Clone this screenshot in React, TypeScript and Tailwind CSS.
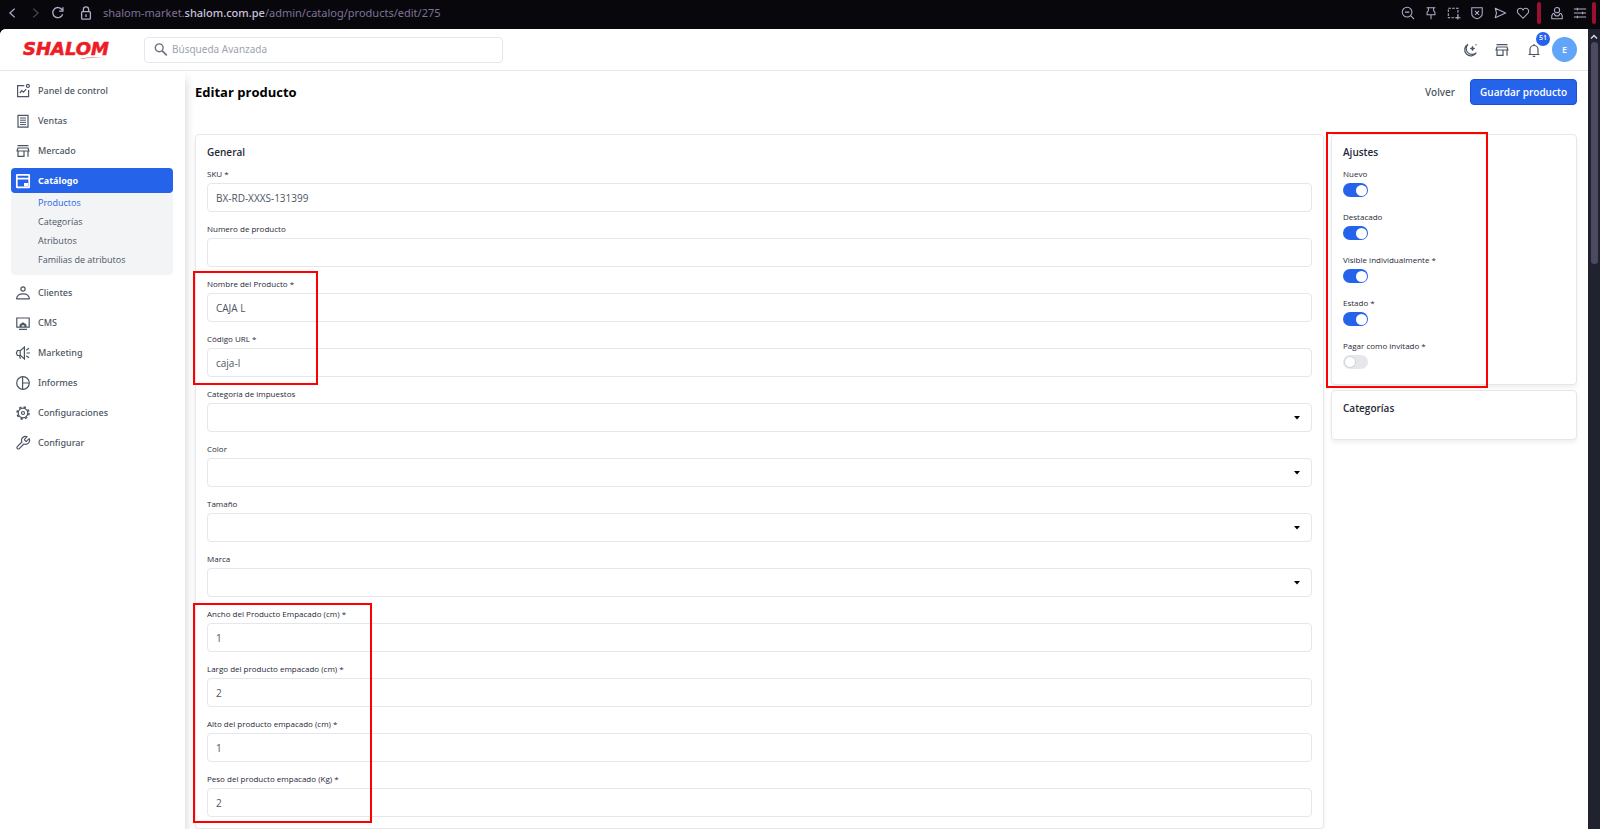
import type { ReactNode } from "react";

type IconProps = { children: ReactNode; className?: string };

const Icon = ({ children, className = "size-4" }: IconProps) => (
  <svg
    viewBox="0 0 16 16"
    className={`${className} shrink-0`}
    fill="none"
    stroke="currentColor"
    strokeWidth="1.2"
    aria-hidden="true"
  >
    {children}
  </svg>
);

const storePaths = (
  <>
    <path d="M2.5 2.6h11" />
    <path d="M3 5l-.9 3h11.8L13 5z" />
    <path d="M3 8v5.4h6V8M13 8v5.8" />
  </>
);

const menu = [
  {
    name: "Panel de control",
    icon: (
      <>
        <path d="M9.3 2.6H2.6v11h11V7" />
        <circle cx="12.9" cy="2.9" r="1.5" />
        <path d="M4.8 10l2-2.4 1.7 1.6 2.6-3" />
      </>
    ),
  },
  {
    name: "Ventas",
    icon: (
      <>
        <path d="M3 2.4h10v11.8H3z" />
        <path d="M5 5h6M5 7.2h6M5 9.4h6M5 11.6h6" strokeWidth="1" />
      </>
    ),
  },
  { name: "Mercado", icon: storePaths },
  {
    name: "Catálogo",
    active: true,
    icon: (
      <>
        <rect x="1.8" y="1.8" width="12.4" height="12.6" rx=".5" strokeWidth="1.7" />
        <path d="M2 5.7h12" strokeWidth="1.7" />
        <path d="M9 10h4v3.5H9z" fill="currentColor" stroke="none" />
      </>
    ),
    children: ["Productos", "Categorías", "Atributos", "Familias de atributos"],
  },
  {
    name: "Clientes",
    icon: (
      <>
        <circle cx="8" cy="4" r="2.1" />
        <path d="M1.6 13.8c.2-3 2.5-5 6.4-5s6.2 2 6.4 5z" strokeLinejoin="round" />
      </>
    ),
  },
  {
    name: "CMS",
    icon: (
      <>
        <path d="M1.8 3h12.4v9.2H1.8zM4 14.3h8" />
        <path d="M4.6 12V9.6L8 7.3l3.4 2.3V12H9.3v-1.7H6.7V12z" fill="currentColor" stroke="none" />
      </>
    ),
  },
  {
    name: "Marketing",
    icon: (
      <>
        <path d="M9.4 2v12L5.6 10.5H2.4L1.4 8l1-2.5h3.2z" />
        <path d="M5.2 5.7v4.8M4.5 10.7l1 3M11.5 8h3.5M11.3 5.2l2.7-2M11.3 10.8l2.7 2" />
      </>
    ),
  },
  {
    name: "Informes",
    icon: (
      <>
        <circle cx="8" cy="8" r="6.3" />
        <path d="M7.6 1.7v12.6M7.6 8h6.7" />
      </>
    ),
  },
  {
    name: "Configuraciones",
    icon: (
      <>
        <circle cx="8" cy="8" r="4.8" />
        <circle cx="8" cy="8" r="6" strokeWidth="1.5" strokeDasharray="2.35 2.35" />
        <circle cx="8" cy="8" r="1.5" />
      </>
    ),
  },
  {
    name: "Configurar",
    icon: (
      <path
        d="M9.7 4.2a.7.7 0 0 0 0 .9l1.1 1.1a.7.7 0 0 0 .9 0l2.5-2.5a4 4 0 0 1-5.3 5.3l-4.6 4.6a1.4 1.4 0 0 1-2-2l4.6-4.6a4 4 0 0 1 5.3-5.3z"
        strokeLinejoin="round"
      />
    ),
  },
];

const toggles = [
  { id: "new", label: "Nuevo", on: true },
  { id: "featured", label: "Destacado", on: true },
  { id: "visible", label: "Visible individualmente *", on: true },
  { id: "status", label: "Estado *", on: true },
  { id: "guest-checkout", label: "Pagar como invitado *", on: false },
];

const Caption = ({ id, children }: { id: string; children: ReactNode }) => (
  <label htmlFor={id} className="block text-[8px] leading-4 font-medium text-[#1f2937]">
    {children}
  </label>
);

const TextField = ({ id, label, value = "" }: { id: string; label: string; value?: string }) => (
  <div className="mb-[9px]">
    <Caption id={id}>{label}</Caption>
    <input
      id={id}
      type="text"
      defaultValue={value}
      className="mt-px block h-[29px] w-full rounded border border-[#e5e7eb] px-2 text-[10px] text-[#4b5563] outline-none"
    />
  </div>
);

const SelectField = ({ id, label }: { id: string; label: string }) => (
  <div className="mb-[9px]">
    <Caption id={id}>{label}</Caption>
    <div className="relative mt-px">
      <select
        id={id}
        className="block h-[29px] w-full appearance-none rounded border border-[#e5e7eb] bg-white px-2 text-[10px] text-[#4b5563] outline-none"
      >
        <option value=""></option>
      </select>
      <svg viewBox="0 0 6 4" className="pointer-events-none absolute top-[13px] right-3 h-1 w-1.5" aria-hidden="true">
        <path d="M0 0h6L3 3.6z" fill="#000" />
      </svg>
    </div>
  </div>
);

const Toggle = ({ id, label, on }: { id: string; label: string; on: boolean }) => (
  <div>
    <Caption id={id}>{label}</Caption>
    <input
      id={id}
      type="checkbox"
      role="switch"
      defaultChecked={on}
      className="mt-px block h-3.5 w-[25px] appearance-none rounded-full bg-[#e5e7eb] p-0.5 before:block before:size-2.5 before:rounded-full before:bg-white before:ring-1 before:ring-[#d1d5db] checked:bg-[#2563eb] checked:pr-px checked:before:ml-auto checked:before:size-[11px] checked:before:ring-0"
    />
  </div>
);

// Red frame drawn over the parts of the form that need attention
const Highlight = ({ className }: { className: string }) => (
  <div className={`pointer-events-none absolute z-10 border-2 border-[#ff0000] ${className}`} />
);

const BrowserBar = () => (
  <div className="flex h-[29px] shrink-0 items-center bg-[#08070b] pb-[3px] text-[#b3abc9]">
    <div className="flex items-center pl-1.5">
      <Icon className="size-[14px]"><path d="M10 3L4.5 8l5.5 5" strokeWidth="1.5" /></Icon>
      <Icon className="ml-2 size-[14px] text-[#4a4655]"><path d="M6 3l5.5 5L6 13" strokeWidth="1.5" /></Icon>
      <Icon className="ml-[9px] size-[14px]">
        <path d="M13.3 9.5A5.8 5.8 0 1 1 12.8 4.5M13.6 1.5v4.3H9.3" strokeWidth="1.5" />
      </Icon>
      <Icon className="ml-[14px] size-[14px]">
        <rect x="3" y="6.5" width="10" height="8.5" rx="1" strokeWidth="1.5" />
        <path d="M5 6.5V4a3 3 0 0 1 6 0v2.5M8 9.5v3" strokeWidth="1.5" />
      </Icon>
      <span className="ml-[10px] font-['Noto_Sans',sans-serif] text-[11px] text-[#7f7299]">
        shalom-market.<span className="font-medium text-[#c9c2dc]">shalom.com.pe</span>
        /admin/catalog/products/edit/275
      </span>
    </div>
    <div className="ml-auto flex items-center">
      <div className="flex gap-[9px]">
        <Icon className="size-[14px]"><circle cx="7" cy="7" r="5.5" /><path d="M11 11l4 4M4.5 7h5" /></Icon>
        <Icon className="size-[14px]"><path d="M3 2h10M5 2v3.5L3.5 7v3h9V7L11 5.5V2M8 10v5" /></Icon>
        <Icon className="size-[14px]">
          <path d="M1.5 2.5h11v11h-11z" strokeDasharray="3 1.4" />
          <path d="M12.5 10.5v5M10 13.5h5.5" />
        </Icon>
        <Icon className="size-[14px]">
          <path d="M2 2h12v6.5c0 3-2.5 5-6 6-3.5-1-6-3-6-6zM5.7 5.5l4.6 4.6M10.3 5.5l-4.6 4.6" />
        </Icon>
        <Icon className="size-[14px]"><path d="M2.5 2.5L14.5 8l-12 5.5L4 8z" strokeLinejoin="round" /></Icon>
        <Icon className="size-[14px]">
          <path d="M8 14L2.5 8.5C.5 6 2 2.5 4.8 2.5 6.5 2.5 7.5 3.5 8 4.5c.5-1 1.5-2 3.2-2C14 2.5 15.5 6 13.5 8.5z" />
        </Icon>
      </div>
      <span className="ml-[7px] h-[22px] w-1 rounded-full bg-[#9b1030]" />
      <Icon className="ml-[9px] size-[14px]">
        <circle cx="8" cy="4.8" r="3" />
        <path d="M5 8.5H3.5L2 11v3.5h12V11l-1.5-2.5H11M5 8.5c0 4 6 4 6 0" />
      </Icon>
      <Icon className="ml-[9px] size-[14px]"><path d="M1 3.5h14M1 8h14M1 12.5h14M5 2v3M11 6.5v3M5 11v3" /></Icon>
      <span className="mr-1 ml-[5px] h-[22px] w-1 rounded-full bg-[#9b1030]" />
    </div>
  </div>
);

const Logo = () => (
  <svg viewBox="0 0 102 20" className="ml-[22px] h-5 w-[102px] overflow-visible" role="img" aria-label="Shalom">
    <text
      x="1"
      y="15"
      className="fill-[#ee1c25] font-['DejaVu_Sans',sans-serif] text-[18px] font-bold italic"
      stroke="#ee1c25"
      strokeWidth=".6"
    >
      SHALOM
    </text>
    <path d="M58 18.5c8-1.6 18-1.6 27-.6-8-.2-18-.2-25 1.1z" fill="#ee1c25" opacity=".6" />
  </svg>
);

const TopBar = () => (
  <header className="flex h-[42px] shrink-0 items-center border-b border-[#e5e7eb] bg-white">
    <Logo />
    <label className="ml-5 flex h-[26px] w-[359px] items-center rounded border border-[#e5e7eb] pl-2 text-[#6b7280]">
      <Icon className="size-4">
        <circle cx="6.2" cy="5.8" r="3.9" strokeWidth="1.4" />
        <path d="M9 8.6l4.8 4.8" strokeWidth="1.7" />
      </Icon>
      <input
        type="text"
        aria-label="Búsqueda Avanzada"
        placeholder="Búsqueda Avanzada"
        className="ml-[3px] w-full font-['Noto_Sans',sans-serif] text-[10px] text-[#4b5563] outline-none placeholder:text-[#9ca3af]"
      />
    </label>
    <div className="ml-auto flex items-center pr-[11px] text-[#4b5563]">
      <button type="button" aria-label="Modo oscuro">
        <Icon>
          <path d="M6 2.2a6.2 6.2 0 1 0 8.3 8.5A5.8 5.8 0 0 1 6 2.2z" />
          <path d="M10.5 4l.7 1.8 1.8.7-1.8.7-.7 1.8-.7-1.8L8 6.5l1.8-.7zM14 2v1.6M13.2 2.8h1.6" fill="currentColor" strokeWidth=".5" />
        </Icon>
      </button>
      <button type="button" aria-label="Tienda" className="ml-4"><Icon>{storePaths}</Icon></button>
      <button type="button" aria-label="Notificaciones" className="relative ml-4">
        <Icon>
          <path d="M2.5 12.5h11M4 12.5V7.5a4 4 0 0 1 8 0v5M8 3.5V2M6.8 14.3h2.4" />
        </Icon>
        <span className="absolute -top-2.5 left-2.5 flex size-3.5 items-center justify-center rounded-full bg-[#2563eb] text-[7px] font-semibold text-white">
          51
        </span>
      </button>
      <button
        type="button"
        className="ml-[10px] flex size-[25px] items-center justify-center rounded-full bg-[#60a5fa] text-[9px] font-semibold text-white"
      >
        E
      </button>
    </div>
  </header>
);

const Sidebar = () => (
  <nav className="z-10 flex w-[185px] shrink-0 flex-col gap-[5px] bg-white pt-[7px] pr-3 pl-[11px] text-[9px] shadow-[0_8px_10px_rgba(0,0,0,0.2)]">
    {menu.map((item) => (
      <div key={item.name}>
        <a
          href="#"
          className={`flex h-[25px] items-center gap-[7px] rounded pl-1 font-['Noto_Sans',sans-serif] ${
            item.active ? "bg-[#2563eb] font-bold text-white" : "font-medium text-[#4b5563]"
          }`}
        >
          <Icon>{item.icon}</Icon>
          {item.name}
        </a>
        {item.children && (
          <div className="rounded-b bg-[#f3f4f6] pb-1.5 pl-[27px]">
            {item.children.map((child, i) => (
              <a key={child} href="#" className={`block leading-[19px] ${i === 0 ? "text-[#2563eb]" : "text-[#4b5563]"}`}>
                {child}
              </a>
            ))}
          </div>
        )}
      </div>
    ))}
  </nav>
);

const Card = ({ title, className = "", children }: { title: string; className?: string; children?: ReactNode }) => (
  <section
    className={`relative rounded-sm border border-[#e5e7eb] bg-white px-[11px] pt-[9px] shadow-[0_3px_4px_rgba(0,0,0,0.06)] ${className}`}
  >
    <h2 className="mb-1.5 text-[10px] leading-4 font-semibold text-[#1f2937]">{title}</h2>
    {children}
  </section>
);

export default function App() {
  return (
    <div className="flex h-screen flex-col overflow-hidden bg-[#08070b] font-['Open_Sans','Noto_Sans',sans-serif]">
      <BrowserBar />
      <div className="flex min-h-0 flex-1">
        <div className="flex min-w-0 flex-1 flex-col overflow-hidden rounded-tl-md bg-white">
          <TopBar />
          <div className="flex min-h-0 flex-1">
            <Sidebar />
            <main className="min-w-0 flex-1 overflow-hidden pt-2 pr-[11px] pl-[10px]">
              <div className="flex items-center justify-between">
                <h1 className="pt-0.5 text-[13px] font-bold text-black">Editar producto</h1>
                <div className="flex items-center gap-[15px]">
                  <a href="#" className="font-['Noto_Sans',sans-serif] text-[10px] font-medium text-[#4b5563]">Volver</a>
                  <button
                    type="button"
                    className="h-[26px] rounded border border-[#1d4ed8] bg-[#2563eb] px-[9px] text-[10px] font-semibold text-white"
                  >
                    Guardar producto
                  </button>
                </div>
              </div>

              <div className="mt-[29px] flex items-start gap-[7px]">
                <Card title="General" className="min-w-0 flex-1 pb-0.5">
                  <TextField id="sku" label="SKU *" value="BX-RD-XXXS-131399" />
                  <TextField id="number" label="Numero de producto" />
                  <div className="relative">
                    <TextField id="name" label="Nombre del Producto *" value="CAJA L" />
                    <TextField id="url" label="Código URL *" value="caja-l" />
                    <Highlight className="-top-[5px] -left-3.5 h-[114px] w-[125px]" />
                  </div>
                  <SelectField id="tax" label="Categoría de impuestos" />
                  <SelectField id="color" label="Color" />
                  <SelectField id="size" label="Tamaño" />
                  <SelectField id="brand" label="Marca" />
                  <div className="relative">
                    <TextField id="width" label="Ancho del Producto Empacado (cm) *" value="1" />
                    <TextField id="length" label="Largo del producto empacado (cm) *" value="2" />
                    <TextField id="height" label="Alto del producto empacado (cm) *" value="1" />
                    <TextField id="weight" label="Peso del producto empacado (Kg) *" value="2" />
                    <Highlight className="-top-[3px] -left-3.5 h-[220px] w-[179px]" />
                  </div>
                </Card>

                <div className="flex w-[246px] shrink-0 flex-col gap-[5px]">
                  <Card title="Ajustes" className="pb-[15px]">
                    <div className="flex flex-col gap-3">
                      {toggles.map((t) => (
                        <Toggle key={t.id} id={t.id} label={t.label} on={t.on} />
                      ))}
                    </div>
                    <Highlight className="-top-[3px] -left-1.5 h-64 w-[162px]" />
                  </Card>
                  <Card title="Categorías" className="pb-[17px]" />
                </div>
              </div>
            </main>
          </div>
        </div>
        <div className="flex w-3 shrink-0 flex-col items-center bg-[#20222f] pt-1">
          <svg viewBox="0 0 8 8" className="size-2" aria-hidden="true">
            <path d="M1 5.500L4 2.500l3 3" fill="none" stroke="#d6d3e2" strokeWidth="1.5" />
          </svg>
          <div className="mt-px h-[222px] w-[7px] rounded-full bg-[#4b4a60]" />
        </div>
      </div>
    </div>
  );
}
